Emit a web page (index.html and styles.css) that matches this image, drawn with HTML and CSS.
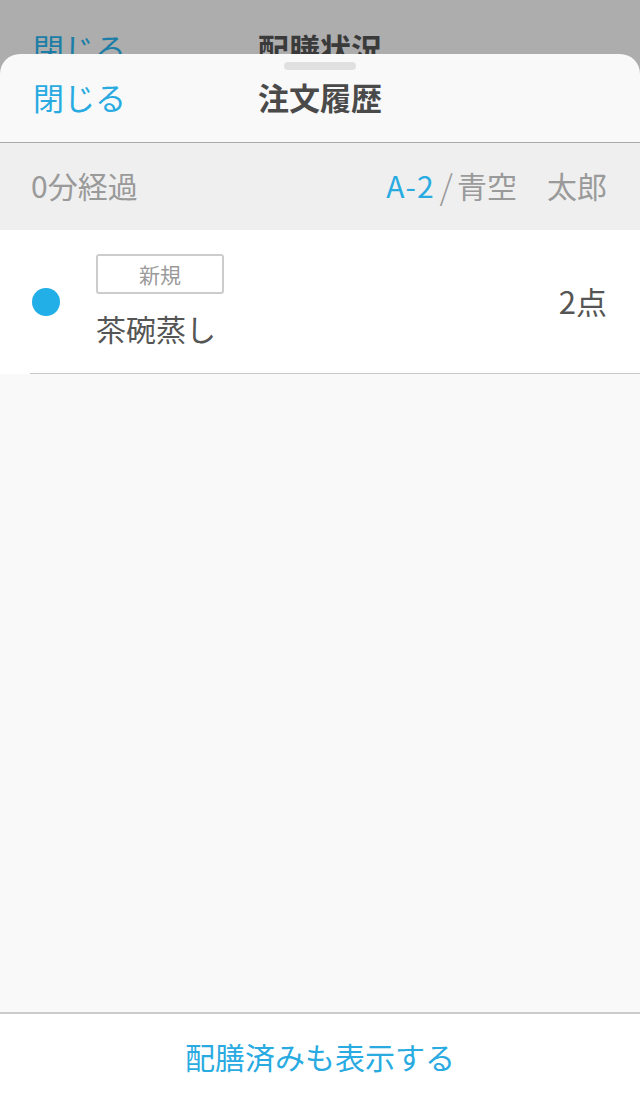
FILE: index.html
```html
<!DOCTYPE html>
<html lang="ja">
<head>
<meta charset="utf-8">
<link rel="stylesheet" href="styles.css">
</head>
<body>
<div class="backdrop">
  <div class="backdrop-bar">
    <span class="backdrop-close">閉じる</span>
    <span class="backdrop-title">配膳状況</span>
  </div>
</div>
<div class="sheet">
  <div class="handle"></div>
  <header class="sheet-header">
    <span class="close">閉じる</span>
    <h1 class="title">注文履歴</h1>
  </header>
  <div class="info">
    <span class="elapsed">0分経過</span>
    <span class="table"><span class="table-no">A-2</span><span class="slash">/</span>青空　太郎</span>
  </div>
  <main class="list">
    <div class="item">
      <span class="dot"></span>
      <div class="item-body">
        <span class="tag">新規</span>
        <span class="item-name">茶碗蒸し</span>
      </div>
      <span class="qty">2点</span>
    </div>
  </main>
  <footer class="footer">
    <span class="footer-link">配膳済みも表示する</span>
  </footer>
</div>
</body>
</html>
```
FILE: styles.css
```css
* { box-sizing: border-box; }
html, body {
  margin: 0;
  padding: 0;
  height: 100%;
}
body {
  background: #adadad;
  font-family: "Noto Sans CJK JP", "Noto Sans", sans-serif;
  width: 640px;
  height: 1102px;
  overflow: hidden;
  display: flex;
  flex-direction: column;
}
.backdrop {
  height: 54px;
  flex: none;
  overflow: hidden;
}
.backdrop-bar {
  position: relative;
  height: 88px;
  padding-top: 28px;
  display: flex;
  justify-content: center;
  font-size: 31px;
  line-height: 40px;
}
.backdrop-close {
  position: absolute;
  left: 33px;
  top: 28px;
  color: #1c7ea6;
}
.backdrop-title {
  font-weight: bold;
  color: #3a3a3a;
}
.sheet {
  flex: 1;
  background: #f9f9f9;
  border-radius: 20px 20px 0 0;
  display: flex;
  flex-direction: column;
  position: relative;
}
.handle {
  position: absolute;
  top: 8px;
  left: 284px;
  width: 72px;
  height: 8px;
  border-radius: 4px;
  background: #e0e0e0;
}
.sheet-header {
  height: 89px;
  border-bottom: 1px solid #aaaaaa;
  display: flex;
  align-items: center;
  justify-content: center;
  position: relative;
  flex: none;
}
.close {
  position: absolute;
  left: 33px;
  top: 23px;
  font-size: 31px;
  line-height: 40px;
  color: #29abe2;
}
.title {
  margin: 0 0 2px;
  font-size: 31px;
  line-height: 40px;
  font-weight: bold;
  color: #4a4a4a;
}
.info {
  height: 87px;
  background: #efefef;
  display: flex;
  align-items: center;
  justify-content: space-between;
  padding: 0 33px 3px 31px;
  font-size: 30px;
  color: #9a9a9a;
  flex: none;
}
.table {
  display: flex;
  align-items: center;
}
.table-no {
  color: #29abe2;
  letter-spacing: 1px;
}
.slash {
  margin: 0 4px 0 5px;
  font-size: 34px;
  font-weight: 300;
}
.list {
  flex: 1;
}
.item {
  background: #ffffff;
  height: 144px;
  display: flex;
  align-items: center;
  padding: 0 33px 0 32px;
  position: relative;
}
.item::after {
  content: "";
  position: absolute;
  left: 30px;
  right: 0;
  bottom: 0;
  height: 1px;
  background: #c8c8c8;
}
.dot {
  width: 28px;
  height: 28px;
  border-radius: 50%;
  background: #22aee6;
  flex: none;
}
.item-body {
  margin-left: 36px;
  display: flex;
  flex-direction: column;
  align-items: flex-start;
  flex: 1;
  padding-bottom: 3px;
}
.tag {
  width: 128px;
  height: 40px;
  border: 2px solid #cccccc;
  border-radius: 3px;
  font-size: 21px;
  line-height: 36px;
  text-align: center;
  color: #9a9a9a;
}
.item-name {
  margin-top: 14px;
  font-size: 30px;
  line-height: 40px;
  color: #555555;
}
.qty {
  font-size: 31px;
  color: #555555;
  padding-bottom: 4px;
}
.footer {
  height: 90px;
  border-top: 2px solid #cccccc;
  background: #ffffff;
  display: flex;
  align-items: center;
  justify-content: center;
  padding-bottom: 4px;
  flex: none;
}
.footer-link {
  font-size: 30px;
  color: #29abe2;
}
```
